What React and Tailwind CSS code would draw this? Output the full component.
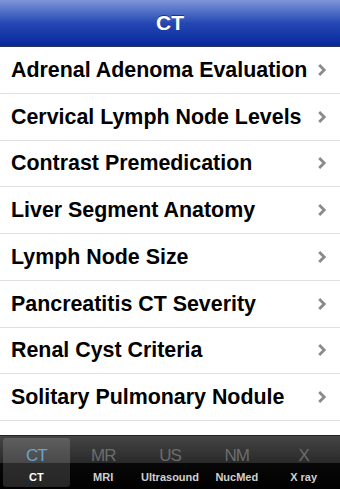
import React from 'react';

const ITEMS = [
  'Adrenal Adenoma Evaluation',
  'Cervical Lymph Node Levels',
  'Contrast Premedication',
  'Liver Segment Anatomy',
  'Lymph Node Size',
  'Pancreatitis CT Severity',
  'Renal Cyst Criteria',
  'Solitary Pulmonary Nodule',
  'Sarcoma Staging',
];

const TABS = [
  { icon: 'CT', label: 'CT', active: true },
  { icon: 'MR', label: 'MRI' },
  { icon: 'US', label: 'Ultrasound' },
  { icon: 'NM', label: 'NucMed' },
  { icon: 'X', label: 'X ray' },
];

function Chevron() {
  return (
    <svg width="10" height="14" viewBox="0 0 10 14" className="shrink-0">
      <path d="M2.2 2 L7.2 7 L2.2 12" fill="none" stroke="#8a8a8a" strokeWidth="2.8" />
    </svg>
  );
}

export default function App() {
  return (
    <div
      className="relative w-[340px] h-[489px] overflow-hidden bg-white flex flex-col"
      style={{ fontFamily: '"Liberation Sans", Arial, sans-serif' }}
    >
      <div className="h-[47px] shrink-0 flex items-center justify-center bg-gradient-to-b from-[#7f95d8] via-[#2548b4] via-50% to-[#06279b] border-b border-[#2a3658]">
        <span className="text-white font-bold text-[21px] [text-shadow:0_-1px_0_rgba(0,0,0,0.45)]">CT</span>
      </div>

      <div className="flex-1 overflow-hidden">
        {ITEMS.map((item) => (
          <div
            key={item}
            className="h-[46.75px] flex items-center justify-between pl-[11px] pr-[13px] border-b border-[#e0e0e0]"
          >
            <span className="text-black font-bold text-[21.4px] whitespace-nowrap">{item}</span>
            <Chevron />
          </div>
        ))}
      </div>

      <div className="absolute left-0 right-0 bottom-0 h-[54px] flex px-[3px] py-[2px] bg-[linear-gradient(to_bottom,#454545_0%,#2a2a2a_50%,#080808_50%,#000_100%)] border-t border-[#222]">
        {TABS.map((tab) => (
          <div
            key={tab.label}
            className={`flex-1 flex flex-col items-center rounded-[3px] ${tab.active ? 'bg-white/15' : ''}`}
          >
            <span
              className={`mt-[9px] h-[18px] leading-[18px] text-[17px] tracking-[-1px] ${tab.active ? 'text-[#6aa3cf]' : 'text-[#6c6c6c]'}`}
            >
              {tab.icon}
            </span>
            <span className={`mt-[6px] text-[11px] font-bold leading-[13px] ${tab.active ? 'text-white' : 'text-[#d0d0d0]'}`}>
              {tab.label}
            </span>
          </div>
        ))}
      </div>
    </div>
  );
}
